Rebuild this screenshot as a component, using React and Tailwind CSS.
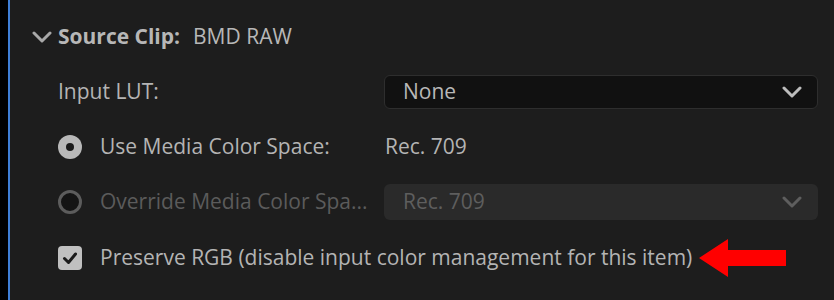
import React from 'react';

const Chevron = ({ className }) => (
  <svg viewBox="0 0 20 12" className={className} fill="none">
    <path d="M2 2 L10 10 L18 2" stroke="currentColor" strokeWidth="3" strokeLinecap="round" strokeLinejoin="round" />
  </svg>
);

const Radio = ({ checked }) =>
  checked ? (
    <div className="w-6 h-6 rounded-full bg-[#b9b9b9] flex items-center justify-center">
      <div className="w-[8px] h-[8px] rounded-full bg-[#1b1b1b]" />
    </div>
  ) : (
    <div className="w-6 h-6 rounded-full border-[3px] border-[#5c5c5c] bg-[#141414]" />
  );

const Select = ({ value, disabled }) => (
  <div
    className={
      disabled
        ? 'h-[36px] w-[434px] rounded-[6px] bg-[#2a2a2a] flex items-center justify-between pl-[19px] pr-[16px] text-[#5e5e5e]'
        : 'h-[34px] w-[434px] rounded-[6px] bg-[#111111] border border-[#2e2e2e] flex items-center justify-between pl-[18px] pr-[15px] text-[#b8b8b8]'
    }
  >
    <span>{value}</span>
    <Chevron className={disabled ? 'w-5 h-3 text-[#5e5e5e]' : 'w-5 h-3 text-[#bdbdbd]'} />
  </div>
);

export default function App() {
  return (
    <div
      className="w-[834px] h-[300px] flex bg-black text-[21px] text-[#b4b4b4] overflow-hidden"
      style={{ fontFamily: '"Open Sans", "Liberation Sans", sans-serif' }}
    >
      <div className="w-2" />
      <div className="w-[2px] bg-[#3f7fd6]" />
      <div className="flex-1 bg-[#1d1d1d] pl-[22px] pt-[10px] flex flex-col">
        <div className="h-[54px] flex items-center">
          <Chevron className="w-5 h-3 text-[#a9a9a9]" />
          <span className="ml-[6px] font-bold text-[#b7b7b7]">Source Clip:</span>
          <span className="ml-[13px] text-[#b7b7b7]">BMD RAW</span>
        </div>

        <div className="h-[55px] pl-[26px] grid grid-cols-[326px_434px] items-center">
          <span>Input LUT:</span>
          <Select value="None" />
        </div>

        <div className="h-[55px] pl-[26px] grid grid-cols-[326px_434px] items-center">
          <div className="flex items-center gap-[18px]">
            <Radio checked />
            <span>Use Media Color Space:</span>
          </div>
          <span className="pl-[1px]">Rec. 709</span>
        </div>

        <div className="h-[55px] pl-[26px] grid grid-cols-[326px_434px] items-center">
          <div className="flex items-center gap-[18px] text-[#5b5b5b]">
            <Radio />
            <span>Override Media Color Spa...</span>
          </div>
          <Select value="Rec. 709" disabled />
        </div>

        <div className="h-[57px] pl-[26px] flex items-center">
          <div className="w-6 h-6 rounded-[4px] bg-[#c0c0c0] flex items-center justify-center">
            <svg viewBox="0 0 24 24" className="w-6 h-6" fill="none">
              <path d="M6.5 12.5 L10.5 16.5 L17.5 8" stroke="#1b1b1b" strokeWidth="3" strokeLinecap="round" strokeLinejoin="round" />
            </svg>
          </div>
          <span className="ml-[18px]">Preserve RGB (disable input color management for this item)</span>
          <svg viewBox="0 0 87 38" className="ml-[7px] w-[87px] h-[38px] shrink-0">
            <polygon points="0,19 29,0 29,11 87,11 87,27 29,27 29,38" fill="#ff0000" />
          </svg>
        </div>
      </div>
    </div>
  );
}
